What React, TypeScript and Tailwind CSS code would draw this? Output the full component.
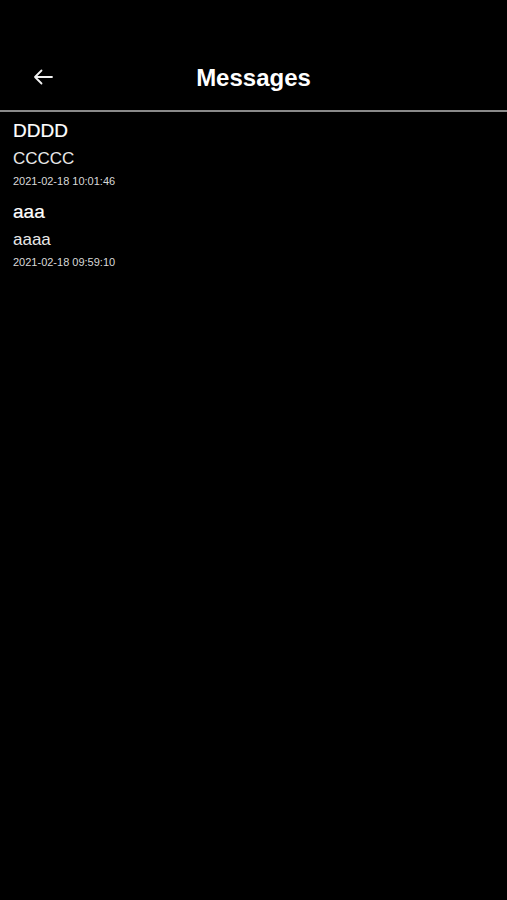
import React from "react";

const items = [
  { title: "DDDD", body: "CCCCC", time: "2021-02-18 10:01:46" },
  { title: "aaa", body: "aaaa", time: "2021-02-18 09:59:10" },
];

export default function App() {
  return (
    <div
      className="min-h-[900px] w-full bg-black text-white"
      style={{ fontFamily: '"Liberation Sans", Arial, sans-serif' }}
    >
      <div className="h-[44px]" />
      <div className="relative flex h-[66px] items-center justify-center">
        <button className="absolute left-[32px] top-1/2 flex h-[24px] w-[22px] -translate-y-1/2 items-center justify-center">
          <svg width="20" height="16" viewBox="0 0 20 16" fill="none">
            <path
              d="M19 8H2M8.5 1.5L2 8l6.5 6.5"
              stroke="#f2f2f2"
              strokeWidth="1.8"
              strokeLinecap="round"
              strokeLinejoin="round"
            />
          </svg>
        </button>
        <h1 className="pt-[2px] text-[24px] font-bold leading-[28px] text-white">Messages</h1>
      </div>
      <div className="h-[2px] bg-[#8a8a8a]" />
      <div className="flex flex-col pt-[1px]">
        {items.map((it) => (
          <div key={it.time} className="flex flex-col px-[13px] py-[5px]">
            <div className="text-[19px] leading-[26px] text-white [-webkit-text-stroke:0.2px_white]">{it.title}</div>
            <div className="mt-[3px] text-[17px] leading-[24px] text-[#e8e8e8]">{it.body}</div>
            <div className="mt-[2px] text-[11px] leading-[16px] text-[#d8d8d8]">{it.time}</div>
          </div>
        ))}
      </div>
    </div>
  );
}
